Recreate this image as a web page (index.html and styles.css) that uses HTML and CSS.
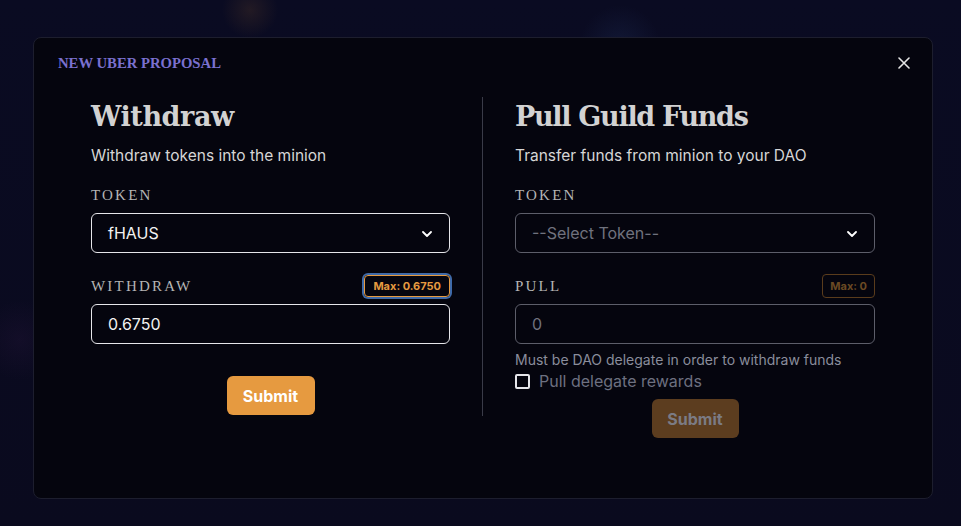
FILE: index.html
```html
<!DOCTYPE html>
<html>
<head>
<meta charset="utf-8">
<link rel="stylesheet" href="styles.css">
</head>
<body>
<div class="backdrop">
  <div class="modal">
    <div class="modal-head">
      <div class="modal-title">NEW UBER PROPOSAL</div>
      <button class="close" aria-label="Close">
        <svg width="12" height="12" viewBox="0 0 12 12"><path d="M1 1L11 11M11 1L1 11" stroke="#e6e6e6" stroke-width="1.6" stroke-linecap="round"/></svg>
      </button>
    </div>
    <div class="columns">
      <section class="col col-left">
        <h2 class="heading">Withdraw</h2>
        <p class="sub">Withdraw tokens into the minion</p>
        <div class="label-row"><span class="label">TOKEN</span></div>
        <div class="field select">
          <span class="value">fHAUS</span>
          <svg class="chev" width="10" height="6" viewBox="0 0 10 6"><path d="M1 1l4 4 4-4" fill="none" stroke="#fff" stroke-width="1.8" stroke-linecap="round" stroke-linejoin="round"/></svg>
        </div>
        <div class="label-row spaced">
          <span class="label">WITHDRAW</span>
          <span class="max focused">Max: 0.6750</span>
        </div>
        <div class="field"><span class="value">0.6750</span></div>
        <div class="btn-row"><button class="submit">Submit</button></div>
      </section>
      <div class="divider"></div>
      <section class="col col-right">
        <h2 class="heading">Pull Guild Funds</h2>
        <p class="sub">Transfer funds from minion to your DAO</p>
        <div class="label-row"><span class="label">TOKEN</span></div>
        <div class="field select dim">
          <span class="value placeholder">--Select Token--</span>
          <svg class="chev" width="10" height="6" viewBox="0 0 10 6"><path d="M1 1l4 4 4-4" fill="none" stroke="#fff" stroke-width="1.8" stroke-linecap="round" stroke-linejoin="round"/></svg>
        </div>
        <div class="label-row spaced">
          <span class="label">PULL</span>
          <span class="max disabled">Max: 0</span>
        </div>
        <div class="field dim"><span class="value placeholder">0</span></div>
        <p class="help">Must be DAO delegate in order to withdraw funds</p>
        <label class="check"><span class="box"></span><span>Pull delegate rewards</span></label>
        <div class="btn-row tight"><button class="submit off">Submit</button></div>
      </section>
    </div>
  </div>
</div>
</body>
</html>
```

FILE: styles.css
```css
* { box-sizing: border-box; }
html, body { margin: 0; padding: 0; }
body {
  width: 961px; height: 526px; overflow: hidden;
  background: #0a0a1f;
  font-family: Inter, "Noto Sans", sans-serif;
}
.backdrop {
  width: 961px; height: 526px;
  padding: 37px 28px 0 33px;
  background:
    radial-gradient(circle at 250px 10px, rgba(90,60,40,0.3) 0, transparent 28px),
    radial-gradient(circle at 620px 45px, rgba(40,60,110,0.25) 0, transparent 40px),
    radial-gradient(circle at 20px 340px, rgba(60,30,80,0.18) 0, transparent 40px),
    linear-gradient(#0a0b22, #0a0a1e);
}
.modal {
  width: 900px; height: 462px;
  background: #05050e;
  border: 1px solid #1d1e2e;
  border-radius: 8px;
  padding: 15px 24px 0 24px;
}
.modal-head {
  display: flex; justify-content: space-between; align-items: center;
  height: 20px;
}
.modal-title {
  font-family: "Liberation Serif", serif;
  font-weight: bold;
  font-size: 14.7px;
  color: #7a70cf;
}
.close {
  background: none; border: none; padding: 0; margin-right: -3px; margin-top: 0;
  width: 14px; height: 14px; display: flex; align-items: center; justify-content: center;
}
.columns {
  display: flex;
  padding: 24px 33px 0 33px;
}
.col { width: 360px; }
.col-right { width: 361px; }
.divider {
  width: 1px; background: #3a3b48; margin: 0 32px 0 32px; height: 319px;
}
.heading {
  margin: 2px 0 0 0;
  font-family: "DejaVu Serif", serif;
  font-weight: bold;
  font-size: 27px;
  line-height: 36px;
  color: #d2d2d2;
  letter-spacing: -0.4px;
}
.col-right .heading { letter-spacing: -1.3px; }
.sub {
  margin: 9px 0 0 0;
  font-size: 15.5px; line-height: 24px;
  color: #d6d6d6;
}
.label-row {
  display: flex; justify-content: space-between; align-items: center;
  margin-top: 17px; height: 20px; margin-bottom: 8px;
}
.label-row.spaced { margin-top: 20px; height: 26px; margin-bottom: 5px; }
.label {
  font-family: "Liberation Serif", serif;
  font-size: 15px;
  letter-spacing: 2.2px;
  color: #b4b4b4;
}
.field {
  height: 40px;
  border: 1px solid #e6e6ea;
  border-radius: 6px;
  display: flex; align-items: center; justify-content: space-between;
  padding: 0 17px 0 16px;
}
.field.dim { border-color: #5d5e6a; }
.value { font-size: 16px; color: #f2f2f2; }
.value.placeholder { color: #70727e; }
.chev { margin-top: 1px; }
.max {
  font-size: 11px; font-weight: 700;
  border-radius: 4px; padding: 0 7px;
  height: 22px; line-height: 20px;
}
.max.focused {
  color: #e69a40; border: 1px solid #e69a40;
  box-shadow: 0 0 0 2px #3f6aa8;
  padding: 0 8px;
}
.max.disabled {
  color: #6b4a23; border: 1px solid #5a3c1c;
  height: 24px; line-height: 22px;
}
.btn-row { display: flex; justify-content: center; margin-top: 32px; }
.btn-row.tight { margin-top: 7px; }
.submit {
  font-family: Inter, sans-serif;
  font-size: 16px; font-weight: 700;
  color: #fff;
  background: #e69a40;
  border: none; border-radius: 6px;
  width: 88px; height: 39px;
}
.submit.off { background: #5c3d1f; color: #7b7b84; width: 87px; }
.help {
  margin: 6px 0 0 0;
  font-size: 14px; line-height: 20px;
  color: #8a8d9c;
}
.check {
  display: flex; align-items: center; gap: 9px;
  font-size: 16px; color: #6d7080;
  margin-top: 0; height: 22px;
}
.box {
  width: 15px; height: 15px;
  border: 2px solid #e6e6ea; border-radius: 2px;
}
```
